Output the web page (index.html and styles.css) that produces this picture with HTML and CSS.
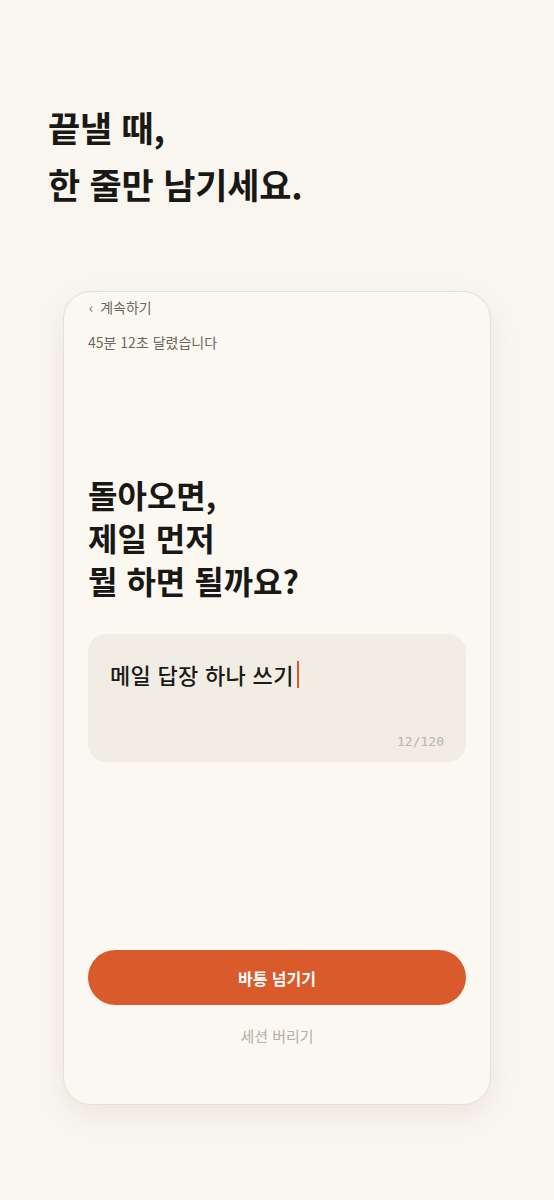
FILE: index.html
```html
<!DOCTYPE html>
<html lang="ko">
<head>
<meta charset="utf-8">
<link rel="stylesheet" href="styles.css">
</head>
<body>
<main class="page">
  <h1 class="hero">끝낼 때,<br>한 줄만 남기세요.</h1>
  <section class="card">
    <div class="back"><span class="chev">‹</span>계속하기</div>
    <div class="elapsed">45분 12초 달렸습니다</div>
    <h2 class="question">돌아오면,<br>제일 먼저<br>뭘 하면 될까요?</h2>
    <div class="input">
      <div class="input-text">메일 답장 하나 쓰기<span class="caret"></span></div>
      <div class="counter">12/120</div>
    </div>
    <div class="spacer"></div>
    <button class="primary">바통 넘기기</button>
    <div class="discard">세션 버리기</div>
  </section>
</main>
</body>
</html>
```
FILE: styles.css
```css
* { box-sizing: border-box; }
html, body { margin: 0; padding: 0; }
body {
  background: #f9f6f0;
  font-family: "Noto Sans CJK KR", "Noto Sans", sans-serif;
  color: #1c1a17;
}
.page {
  width: 554px;
  height: 1200px;
  padding: 98px 0 0 63px;
}
.hero {
  margin: 0 0 0 -15px;
  font-size: 35px;
  font-weight: 700;
  line-height: 57px;
  letter-spacing: -0.2px;
  color: #1a1815;
}
.card {
  margin-top: 79px;
  width: 428px;
  height: 814px;
  border: 1px solid #e5dfd3;
  border-radius: 28px;
  background: #fbf8f2;
  box-shadow: 0 10px 28px rgba(120, 100, 70, 0.10);
  padding: 5px 24px 0 24px;
  display: flex;
  flex-direction: column;
}
.back {
  font-size: 14px;
  line-height: 20px;
  color: #6d675e;
  display: flex;
  align-items: center;
}
.chev { font-size: 14px; margin-right: 7px; margin-left: 1px; }
.elapsed {
  margin-top: 15px;
  font-size: 14px;
  line-height: 20px;
  color: #6d675e;
}
.question {
  margin: 121px 0 0 0;
  font-size: 32px;
  font-weight: 700;
  line-height: 43px;
  letter-spacing: 0;
  color: #1a1815;
}
.input {
  margin-top: 32px;
  height: 128px;
  border-radius: 18px;
  background: #f1ede4;
  padding: 24px 22px 0 22px;
  display: flex;
  flex-direction: column;
}
.input-text {
  font-size: 22px;
  line-height: 32px;
  font-weight: 500;
  letter-spacing: 0.3px;
  color: #1c1a17;
  display: flex;
  align-items: center;
}
.caret {
  display: inline-block;
  width: 2px;
  height: 27px;
  background: #d95a2a;
  margin-left: 3px;
}
.counter {
  margin-top: auto;
  margin-bottom: 12px;
  align-self: flex-end;
  font-family: "DejaVu Sans Mono", "Liberation Mono", monospace;
  font-size: 13px;
  line-height: 16px;
  color: #b9b3a9;
}
.spacer { flex: 1; }
.primary {
  height: 55px;
  border: none;
  border-radius: 28px;
  background: #d95a2a;
  color: #fff;
  font-family: "Noto Sans CJK KR", "Noto Sans", sans-serif;
  font-size: 16px;
  font-weight: 700;
  padding: 0;
}
.discard {
  margin-top: 20px;
  margin-bottom: 57px;
  text-align: center;
  font-size: 15px;
  line-height: 22px;
  color: #b5afa5;
}
```
